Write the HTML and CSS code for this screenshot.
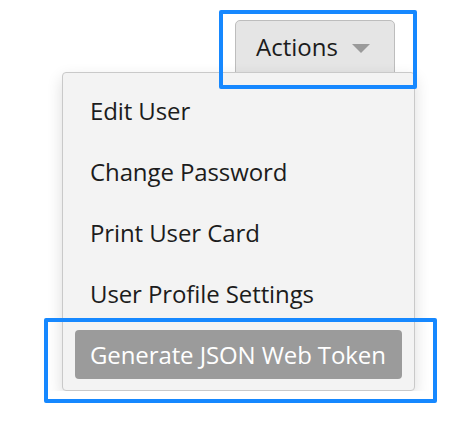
FILE: index.html
```html
<!DOCTYPE html>
<html>
<head>
  <title>User Actions</title>
  <link rel="stylesheet" href="styles.css">
</head>
<body>
  <div class="page">
    <div class="dropdown">
      <button class="actions">
        <span>Actions</span>
        <span class="caret"></span>
      </button>
      <ul class="menu">
        <li>Edit User</li>
        <li>Change Password</li>
        <li>Print User Card</li>
        <li>User Profile Settings</li>
        <li class="active">Generate JSON Web Token</li>
      </ul>
    </div>
  </div>

  <!-- annotation frames -->
  <div class="mark mark-button"></div>
  <div class="mark mark-item"></div>
</body>
</html>
```

FILE: styles.css
```css
body {
  margin: 0;
  background: #fff;
  font-family: "Open Sans", "DejaVu Sans", sans-serif;
  color: #1c1c1c;
}
.page {
  padding-top: 20px;
}
.dropdown {
  margin-left: 62px;
  width: 353px;
  display: flex;
  flex-direction: column;
  align-items: flex-end;
}
.actions {
  margin-right: 20px;
  width: 160px;
  height: 54px;
  padding: 9px 18px 0 20px;
  display: flex;
  align-items: flex-start;
  background: #e5e5e5;
  border: 1px solid #bdbdbd;
  border-radius: 5px 5px 0 0;
  font-family: inherit;
  font-size: 24px;
  line-height: 33px;
  color: #1c1c1c;
  box-sizing: border-box;
}
.caret {
  margin-left: 14px;
  margin-top: 14px;
  width: 0;
  height: 0;
  border-left: 9px solid transparent;
  border-right: 9px solid transparent;
  border-top: 9px solid #9a9a9a;
}
.menu {
  position: relative;
  z-index: 1;
  margin: -2px 0 0;
  width: 353px;
  box-sizing: border-box;
  list-style: none;
  padding: 13px 12px 11px;
  display: flex;
  flex-direction: column;
  gap: 12px;
  background: #f3f3f3;
  border: 1px solid #c9c9c9;
  border-radius: 4px;
  box-shadow: 0 6px 16px rgba(0, 0, 0, 0.14);
}
.menu li {
  height: 49px;
  line-height: 49px;
  padding: 0 14px 0 15px;
  font-size: 24px;
  letter-spacing: -0.1px;
  white-space: nowrap;
  border-radius: 4px;
}
.menu li.active {
  background: #9b9b9b;
  color: #fff;
}
.mark {
  position: absolute;
  z-index: 2;
  border: 4px solid #1688ff;
  border-radius: 2px;
  box-sizing: border-box;
}
.mark-button {
  left: 219px;
  top: 10px;
  width: 198px;
  height: 79px;
}
.mark-item {
  left: 44px;
  top: 318px;
  width: 393px;
  height: 85px;
}
```
